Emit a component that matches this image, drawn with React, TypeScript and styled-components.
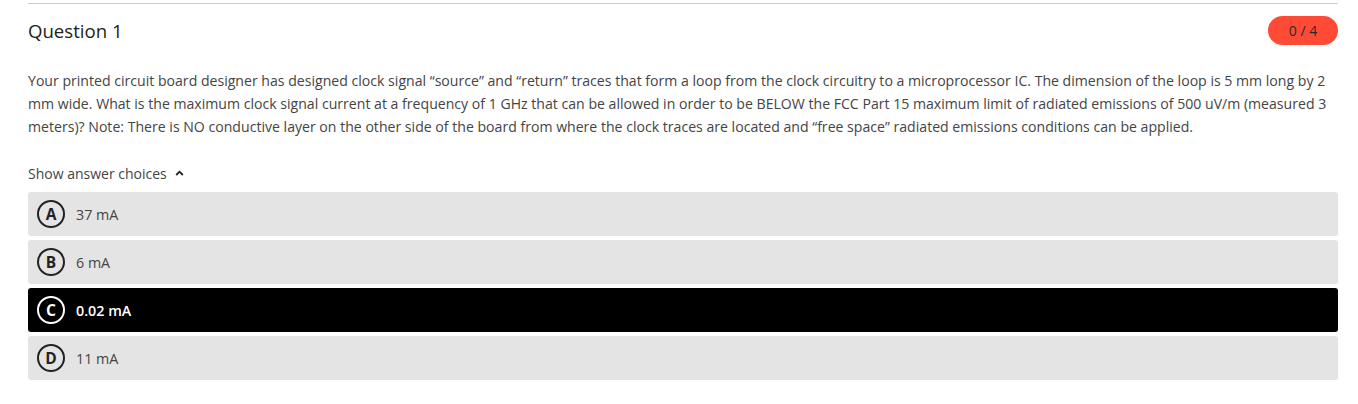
import React from 'react'
import styled, { createGlobalStyle } from 'styled-components'

const GlobalStyle = createGlobalStyle`
  body {
    margin: 0;
    background: #ffffff;
    font-family: "Open Sans", "Liberation Sans", sans-serif;
  }
`

const Page = styled.div`
  width: 1310px;
  padding: 3px 0 0 28px;
`

const Card = styled.section`
  border-top: 1px solid #cccccc;
`

const Header = styled.div`
  display: flex;
  align-items: center;
  justify-content: space-between;
  padding-top: 12px;
`

const Title = styled.h2`
  margin: 0;
  font-size: 18.6px;
  font-weight: 400;
  color: #222222;
`

const ScoreBadge = styled.span`
  display: flex;
  align-items: center;
  justify-content: center;
  width: 70px;
  height: 29px;
  border-radius: 15px;
  background: #ff4b36;
  color: #2a2a2a;
  font-size: 14px;
`

const Prompt = styled.p`
  margin: 24px 0 0;
  font-size: 14.1px;
  line-height: 23px;
  color: #444444;
`

const Toggle = styled.button`
  display: flex;
  align-items: center;
  gap: 8px;
  margin-top: 25px;
  padding: 0;
  height: 20px;
  border: 0;
  background: none;
  font-family: inherit;
  font-size: 14px;
  color: #444444;
  cursor: pointer;
`

const Choices = styled.ul`
  list-style: none;
  margin: 9px 0 0;
  padding: 0;
  display: flex;
  flex-direction: column;
  gap: 4px;
`

const Choice = styled.li<{ $selected?: boolean }>`
  display: flex;
  align-items: center;
  gap: 11px;
  height: 44px;
  padding-left: 9px;
  border-radius: 3px;
  background: ${({ $selected }) => ($selected ? '#000000' : '#e4e4e4')};
  color: ${({ $selected }) => ($selected ? '#ffffff' : '#444444')};
  font-size: 14.3px;
  font-weight: ${({ $selected }) => ($selected ? 600 : 400)};
`

const Letter = styled.span<{ $selected?: boolean }>`
  display: flex;
  align-items: center;
  justify-content: center;
  box-sizing: border-box;
  width: 28px;
  height: 28px;
  border-radius: 50%;
  border: 2px solid ${({ $selected }) => ($selected ? '#ffffff' : '#222222')};
  color: ${({ $selected }) => ($selected ? '#ffffff' : '#222222')};
  font-size: 15.5px;
  font-weight: 700;
`

const choices = [
  { letter: 'A', text: '37 mA' },
  { letter: 'B', text: '6 mA' },
  { letter: 'C', text: '0.02 mA', selected: true },
  { letter: 'D', text: '11 mA' },
]

const App: React.FC = () => (
  <Page>
    <GlobalStyle />
    <Card>
      <Header>
        <Title>Question 1</Title>
        <ScoreBadge>0 / 4</ScoreBadge>
      </Header>
      <Prompt>
        Your printed circuit board designer has designed clock signal “source” and “return” traces that form a loop from the clock circuitry to a microprocessor IC. The dimension of the loop is 5 mm long by 2 mm wide. What is the maximum clock signal current at a frequency of 1 GHz that can be allowed in order to be BELOW the FCC Part 15 maximum limit of radiated emissions of 500 uV/m (measured 3 meters)? Note: There is NO conductive layer on the other side of the board from where the clock traces are located and “free space” radiated emissions conditions can be applied.
      </Prompt>
      <Toggle>
        Show answer choices
        <svg width="9" height="6" viewBox="0 0 9 6">
          <path d="M1.2 5 L4.5 1.7 L7.8 5" fill="none" stroke="#222" strokeWidth="1.8" />
        </svg>
      </Toggle>
      <Choices>
        {choices.map((c) => (
          <Choice key={c.letter} $selected={c.selected}>
            <Letter $selected={c.selected}>{c.letter}</Letter>
            {c.text}
          </Choice>
        ))}
      </Choices>
    </Card>
  </Page>
)

export default App
